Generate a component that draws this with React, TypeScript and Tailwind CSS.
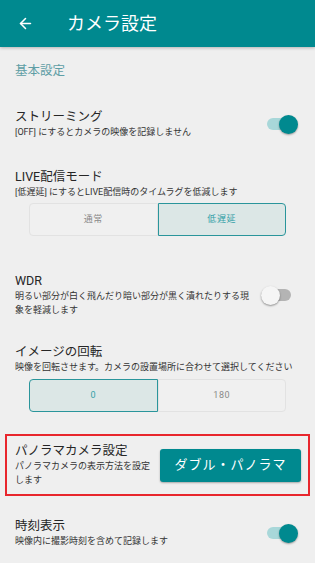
import { ArrowLeft } from "lucide-react";

const font = { fontFamily: '"Roboto", "Noto Sans CJK JP", sans-serif' };

function Toggle({ on }: { on: boolean }) {
    if (on) {
        return (
            <div className="relative w-[31px] h-[19px] flex items-center">
                <div className="w-[30px] h-[12px] rounded-full bg-[#a8d7d9]"></div>
                <div className="absolute right-0 top-0 w-[19px] h-[19px] rounded-full bg-[#00898f] shadow-[0_1px_2px_rgba(0,0,0,0.35)]"></div>
            </div>
        );
    }
    return (
        <div className="relative w-[31px] h-[19px] flex items-center">
            <div className="w-[30px] h-[12px] rounded-full bg-[#b4b4b4]"></div>
            <div className="absolute left-0 top-0 w-[19px] h-[19px] rounded-full bg-[#f5f5f5] shadow-[0_1px_2px_rgba(0,0,0,0.4)]"></div>
        </div>
    );
}

function Segmented({ options, selected }: { options: string[]; selected: number }) {
    return (
        <div className="mx-[29px] w-[257px] h-[33px] flex">
            {options.map((o, i) => {
                const active = i == selected;
                const rounded = i == 0 ? "rounded-l-[4px]" : "rounded-r-[4px]";
                return (
                    <div
                        key={o}
                        className={
                            active
                                ? `flex-1 flex items-center justify-center border border-[#2a959b] bg-[#dce7e6] text-[#33a0a6] text-[9px] tracking-[0.6px] ${rounded}`
                                : `flex-1 flex items-center justify-center border border-[#e2e2e2] bg-[#f0f0f0] text-[#8a8a8a] text-[9px] tracking-[0.6px] ${rounded}`
                        }
                    >
                        {o}
                    </div>
                );
            })}
        </div>
    );
}

export default function App() {
    return (
        <main className="w-[315px] h-[563px] bg-[#efefef] overflow-hidden text-[#262626] font-normal" style={font}>
            <header className="h-[47px] bg-[#00898f] flex items-center shadow-[0_1px_3px_rgba(0,0,0,0.25)] relative z-10">
                <ArrowLeft className="ml-[17px] text-white" size={17} strokeWidth={2.2} />
                <h1 className="ml-[33px] text-white text-[18px] leading-none">カメラ設定</h1>
            </header>

            <div className="pl-[15px] pt-[16px] h-[32px] text-[12.5px] leading-[16px] text-[#5e9ea5]">基本設定</div>

            {/* ストリーミング */}
            <section className="mt-[30px] pl-[15px] pr-[17px] flex items-center justify-between">
                <div>
                    <div className="text-[12.5px] leading-[16px]">ストリーミング</div>
                    <div className="text-[9px] leading-[14px] text-[#333]">[OFF] にするとカメラの映像を記録しません</div>
                </div>
                <Toggle on={true} />
            </section>

            {/* LIVE */}
            <section className="mt-[30px]">
                <div className="pl-[15px]">
                    <div className="text-[12.5px] leading-[16px]">LIVE配信モード</div>
                    <div className="text-[9px] leading-[14px] text-[#333]">[低遅延] にするとLIVE配信時のタイムラグを低減します</div>
                </div>
                <div className="mt-[4px]">
                    <Segmented options={["通常", "低遅延"]} selected={1} />
                </div>
            </section>

            {/* WDR */}
            <section className="mt-[37px] pl-[15px] pr-[23px] flex items-center justify-between">
                <div className="w-[238px]">
                    <div className="text-[12.5px] leading-[16px]">WDR</div>
                    <div className="text-[9px] leading-[14px] text-[#333]">明るい部分が白く飛んだり暗い部分が黒く潰れたりする現象を軽減します</div>
                </div>
                <Toggle on={false} />
            </section>

            {/* 回転 */}
            <section className="mt-[27px]">
                <div className="pl-[15px]">
                    <div className="text-[12.5px] leading-[16px]">イメージの回転</div>
                    <div className="text-[9px] leading-[14px] text-[#333]">映像を回転させます。カメラの設置場所に合わせて選択してください</div>
                </div>
                <div className="mt-[5px]">
                    <Segmented options={["0", "180"]} selected={0} />
                </div>
            </section>

            {/* パノラマ */}
            <section className="mt-[22px] mx-[5px] h-[62px] border-2 border-[#e8262d] pl-[8px] pr-[7px] flex items-center justify-between">
                <div className="w-[140px]">
                    <div className="text-[12.5px] leading-[16px]">パノラマカメラ設定</div>
                    <div className="text-[9px] leading-[14px] text-[#333]">パノラマカメラの表示方法を設定します</div>
                </div>
                <button className="w-[141px] h-[33px] rounded-[3px] bg-[#00898f] text-white text-[13px] tracking-[1px] shadow-[0_1px_2px_rgba(0,0,0,0.3)]">
                    ダブル・パノラマ
                </button>
            </section>

            {/* 時刻表示 */}
            <section className="mt-[22px] pl-[15px] pr-[17px] flex items-center justify-between">
                <div>
                    <div className="text-[12.5px] leading-[16px]">時刻表示</div>
                    <div className="text-[9px] leading-[14px] text-[#333]">映像内に撮影時刻を含めて記録します</div>
                </div>
                <Toggle on={true} />
            </section>
        </main>
    );
}
